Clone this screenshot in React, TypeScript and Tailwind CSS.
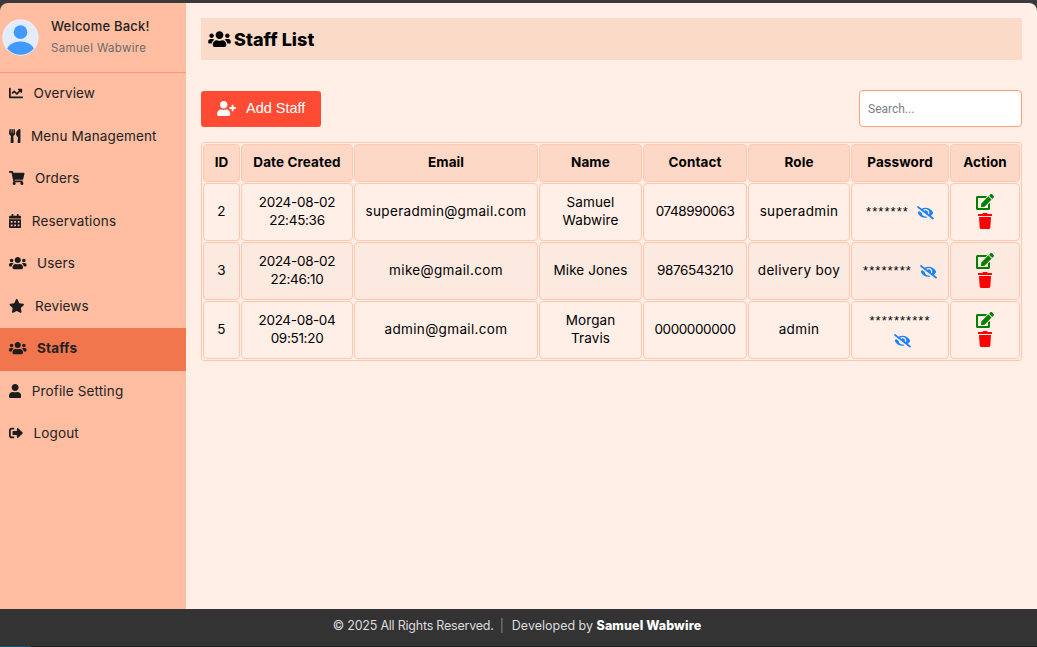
import { FaChartLine, FaUtensils, FaShoppingCart, FaCalendarAlt, FaUsers, FaStar, FaUser, FaSignOutAlt, FaUserPlus, FaEyeSlash, FaEdit, FaTrash } from "react-icons/fa";

const nav = [
  { label: "Overview", Icon: FaChartLine, size: "w-[14px]" },
  { label: "Menu Management", Icon: FaUtensils, size: "w-[11.5px]" },
  { label: "Orders", Icon: FaShoppingCart, size: "w-[15.5px]" },
  { label: "Reservations", Icon: FaCalendarAlt, size: "w-[12.25px]" },
  { label: "Users", Icon: FaUsers, size: "w-[17.5px]" },
  { label: "Reviews", Icon: FaStar, size: "w-[15.5px]" },
  { label: "Staffs", Icon: FaUsers, size: "w-[17.5px]", active: true },
  { label: "Profile Setting", Icon: FaUser, size: "w-[12.25px]" },
  { label: "Logout", Icon: FaSignOutAlt, size: "w-[14px]" },
];

const rows = [
  { id: "2", date: "2024-08-02 22:45:36", email: "superadmin@gmail.com", name: "Samuel Wabwire", contact: "0748990063", role: "superadmin", pw: "*******", eye: "ml-[8px]" },
  { id: "3", date: "2024-08-02 22:46:10", email: "mike@gmail.com", name: "Mike Jones", contact: "9876543210", role: "delivery boy", pw: "********", eye: "ml-[8px]", alt: true },
  { id: "5", date: "2024-08-04 09:51:20", email: "admin@gmail.com", name: "Morgan Travis", contact: "0000000000", role: "admin", pw: "**********", eye: "ml-[4px]" },
];

const headers = ["ID", "Date Created", "Email", "Name", "Contact", "Role", "Password", "Action"];
const widths = ["w-[37px]", "w-[112px]", "w-[184px]", "w-[103px]", "w-[104px]", "w-[102px]", "w-[98px]", "w-[70px]"];
const td = "border border-[#ffc7ad] rounded-[4px] px-[8px] pb-[2px] text-center align-middle";

export default function App() {
  return (
    <div className="h-[647px] w-[1037px] overflow-hidden bg-[#3a3a3a] pt-[3px] flex flex-col font-['Inter','Liberation_Sans',sans-serif] tracking-[0.35px] text-black">
      <div className="flex flex-1 min-h-0 rounded-t-[8px] overflow-hidden">
        <aside className="w-[186px] shrink-0 bg-[#ffbda1]">
          <div className="h-[70px] border-b border-[#ff9478] flex items-start pl-[2px] pt-[16px]">
            <svg viewBox="0 0 38 38" className="w-[37px] h-[37px] shrink-0 mt-[-0.5px]">
              <defs><clipPath id="av"><circle cx="19" cy="19" r="17.8" /></clipPath></defs>
              <circle cx="19" cy="19" r="18.5" fill="#f2f5ff" />
              <circle cx="19" cy="19" r="17.8" fill="#e2ebff" />
              <g clipPath="url(#av)" fill="#4199ff">
                <circle cx="19" cy="13.5" r="7" />
                <ellipse cx="19" cy="34" rx="14.5" ry="11" />
              </g>
            </svg>
            <div className="ml-[12px] mt-[-3px]">
              <div className="text-[13px] leading-[20px] text-[#1f1f1f] font-medium tracking-[0.2px]">Welcome Back!</div>
              <div className="text-[11.5px] leading-[16px] mt-[4px] text-[#6b6b6b]">Samuel Wabwire</div>
            </div>
          </div>
          <nav>
            {nav.map(({ label, Icon, size, active }) => (
              <div key={label} className={`h-[42.5px] flex items-center pl-[9px] text-[13.5px] tracking-[0.15px] text-[#222222] ${active ? "bg-[#f1754d] font-bold" : ""}`}>
                <Icon className={`h-[14px] ${size} mr-[10.5px] shrink-0 mt-[-2px] text-[#1c1c1c]`} />
                <span className="mt-[-1.5px]">{label}</span>
              </div>
            ))}
          </nav>
        </aside>
        <main className="flex-1 min-w-0 bg-[#ffefe7] pl-[15px] pr-[15px] pt-[15px]">
          <div className="h-[42px] bg-[#fcdac8] flex items-center pl-[7px]">
            <FaUsers className="h-[18px] w-[23px] mr-[3px]" />
            <h1 className="text-[18px] font-extrabold tracking-[0.05px]">Staff List</h1>
          </div>
          <div className="mt-[30px] flex items-center justify-between">
            <button className="h-[36px] w-[120px] rounded-[3px] bg-[#ff4b33] text-white flex items-center pl-[16px] font-['Liberation_Sans',sans-serif] tracking-normal text-[14.5px]">
              <FaUserPlus className="h-[15px] w-[19px] mr-[10px]" />
              <span className="mt-[1px]">Add Staff</span>
            </button>
            <input
              placeholder="Search..."
              className="h-[37px] w-[163px] rounded-[4px] border border-[#ff9f73] bg-white px-[8px] text-[12px] tracking-normal font-['Roboto',sans-serif] placeholder:text-[#7a7f87] outline-none"
            />
          </div>
          <table className="mt-[15px] w-[821px] table-fixed border border-[#ffc7ad] border-separate border-spacing-[1px] rounded-[3px] text-[13.5px]">
            <colgroup>
              {widths.map((w, i) => <col key={i} className={w} />)}
            </colgroup>
            <thead>
              <tr>
                {headers.map((h) => (
                  <th key={h} className={`${td} h-[38px] bg-[#fdd8c6] font-bold tracking-[0.1px]`}>{h}</th>
                ))}
              </tr>
            </thead>
            <tbody>
              {rows.map((r) => (
                <tr key={r.id} className={r.alt ? "bg-[#fce9e0]" : ""}>
                  <td className={`${td} h-[58px]`}>{r.id}</td>
                  <td className={`${td} leading-[18px] tracking-[-0.3px]`}>{r.date}</td>
                  <td className={td}>{r.email}</td>
                  <td className={`${td} leading-[18px] tracking-[0.1px]`}>{r.name}</td>
                  <td className={`${td} tracking-[-0.4px]`}>{r.contact}</td>
                  <td className={td}>{r.role}</td>
                  <td className={`${td} leading-[18px]`}>
                    <span className="font-['Liberation_Sans',sans-serif] text-[13px] tracking-[1.05px]">{r.pw}</span>
                    <FaEyeSlash className={`inline-block h-[13.5px] w-[17px] ${r.eye} text-[#1a82ff] align-[-4px]`} />
                  </td>
                  <td className={td}>
                    <div className="flex flex-col items-center gap-[3px]">
                      <FaEdit className="h-[16px] w-[18px] text-[#008000]" />
                      <FaTrash className="h-[16px] w-[14px] text-[#ff0000]" />
                    </div>
                  </td>
                </tr>
              ))}
            </tbody>
          </table>
        </main>
      </div>
      <footer className="h-[38px] shrink-0 bg-[#333333] flex flex-col text-[12.5px] text-[#dddddd] tracking-[0px]">
        <div className="flex-1 flex items-center justify-center pb-[3px] pr-[3px]">
          <span className="tracking-[-0.22px]">© 2025 All Rights Reserved.</span>
          <span className="ml-[6px] mr-[8px] text-[#888888]">|</span>
          <span>Developed by <strong className="font-extrabold text-white tracking-[0.1px]">Samuel Wabwire</strong></span>
        </div>
        <div className="h-[1px] flex bg-[#1f1f1f]"><div className="w-[31px] bg-[#0f4f7a]" /></div>
      </footer>
    </div>
  );
}
